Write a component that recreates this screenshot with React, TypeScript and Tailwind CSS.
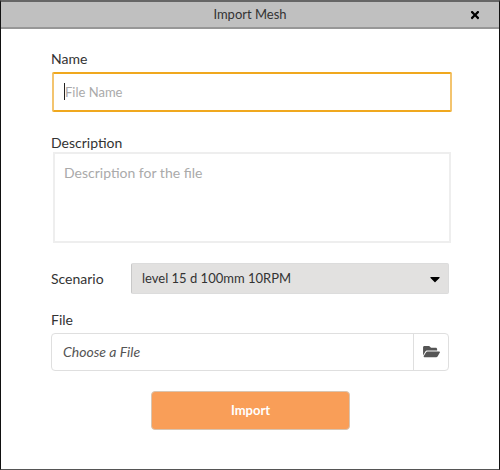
import React from 'react';
import { FaCaretDown, FaFolderOpen, FaTimes } from 'react-icons/fa';

const labelClass = 'block text-[14px] leading-[17px] text-[#333]';

const App: React.FC = () => {
  return (
    <div className="w-[500px] h-[470px] bg-white border-x border-b border-x-[#111] border-b-[#555] border-t-2 border-t-[#666] font-['Lato',sans-serif] flex flex-col">
      {/* Title bar */}
      <div className="h-[27px] shrink-0 bg-[#c0c0c0] border-b-2 border-[#979797] relative flex items-center justify-center">
        <span className="text-[13px] text-[#333]">Import Mesh</span>
        <FaTimes className="absolute right-[18px] top-[7px] w-[12px] h-[12px] text-black" />
      </div>

      <div className="flex flex-col pl-[50px] pr-[50px] pt-[21px]">
        {/* Name */}
        <label className={labelClass}>Name</label>
        <div className="relative mt-[5px] ml-[1px] w-[400px]">
          <input
            type="text"
            placeholder="File Name"
            className="block w-full h-[40px] px-[11px] rounded-[2px] border-2 border-[#f0a81e] border-l-[#f3c46f] border-r-[#f3c46f] text-[13px] outline-none placeholder-[#aaa] bg-white"
          />
          <span className="absolute left-[12px] top-[11px] w-px h-[17px] bg-[#222]" />
        </div>

        {/* Description */}
        <label className={`${labelClass} mt-[22px]`}>Description</label>
        <textarea
          placeholder="Description for the file"
          className="block mt-[1px] ml-[2px] w-[398px] h-[91px] px-[9px] py-[9px] border-2 border-[#eeeeee] text-[14px] leading-[19px] outline-none resize-none placeholder-[#aaa]"
        />

        {/* Scenario */}
        <div className="flex items-center mt-[20px]">
          <label className="w-[80px] text-[14px] text-[#333]">Scenario</label>
          <div className="w-[318px] h-[31px] bg-[#e2e1e0] border border-[#dcdcdc] border-l-[#c8c8c8] rounded-[2px] flex items-center justify-between pl-[10px] pr-[5px]">
            <span className="text-[13px] text-[#333]">level 15 d 100mm 10RPM</span>
            <FaCaretDown className="w-[16px] h-[16px] text-black" />
          </div>
        </div>

        {/* File */}
        <label className={`${labelClass} mt-[17px]`}>File</label>
        <div className="mt-[5px] w-[398px] h-[38px] flex border border-[#dfdfdf] rounded-[4px]">
          <div className="flex-1 flex items-center pl-[11px] pb-[2px] text-[14px] italic text-[#555]">Choose a File</div>
          <div className="w-[35px] pb-[2px] border-l border-[#dfdfdf] flex items-center justify-center">
            <FaFolderOpen className="w-[17px] h-[15px] text-[#555]" />
          </div>
        </div>

        {/* Import */}
        <button className="self-center ml-[1px] mt-[20px] w-[199px] h-[39px] bg-[#f99e58] border border-[#d9c4b0] rounded-[4px] text-white text-[13px] font-bold">
          Import
        </button>
      </div>
    </div>
  );
};

export default App;
